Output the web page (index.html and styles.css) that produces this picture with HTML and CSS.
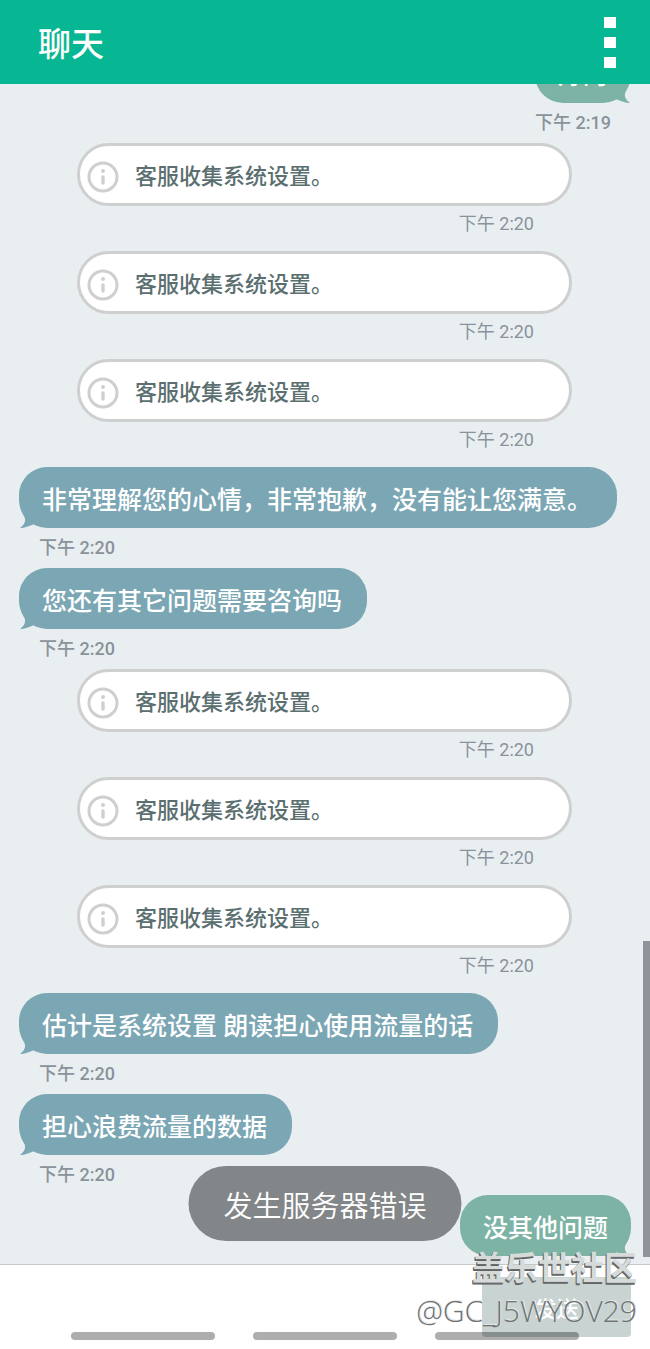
FILE: index.html
```html
<!DOCTYPE html>
<html lang="zh-CN">
  <head>
    <meta charset="UTF-8" />
    <meta name="viewport" content="width=device-width, initial-scale=1.0" />
    <title>聊天</title>
    <link rel="stylesheet" href="styles.css">
  </head>
  <body>
    <!-- shared shapes -->
    <svg class="sprites" aria-hidden="true">
      <symbol id="info" viewBox="0 0 32 32">
        <circle cx="16" cy="16" r="14" fill="none" stroke="currentColor" stroke-width="3" />
        <circle cx="16" cy="10" r="2" fill="currentColor" />
        <path d="M16 16V22" stroke="currentColor" stroke-width="3.4" stroke-linecap="round" />
      </symbol>
      <symbol id="tail" viewBox="0 0 24 16">
        <path d="M3 0C6 5 9 10 1 16C6 16 10 14 14 12.5L22 10L12 0Z" fill="currentColor" />
      </symbol>
    </svg>

    <header class="header">
      <h1>聊天</h1>
      <button class="menu-button" type="button" aria-label="菜单">
        <span></span>
        <span></span>
        <span></span>
      </button>
    </header>

    <main class="chat">
      <div class="message sent">
        <p class="bubble">好的<svg class="tail"><use href="#tail" /></svg></p>
        <time>下午 2:19</time>
      </div>

      <div class="notice">
        <p class="pill"><svg class="info"><use href="#info" /></svg>客服收集系统设置。</p>
        <time>下午 2:20</time>
      </div>
      <div class="notice">
        <p class="pill"><svg class="info"><use href="#info" /></svg>客服收集系统设置。</p>
        <time>下午 2:20</time>
      </div>
      <div class="notice">
        <p class="pill"><svg class="info"><use href="#info" /></svg>客服收集系统设置。</p>
        <time>下午 2:20</time>
      </div>

      <div class="message">
        <p class="bubble">非常理解您的心情，非常抱歉，没有能让您满意。<svg class="tail"><use href="#tail" /></svg></p>
        <time>下午 2:20</time>
      </div>
      <div class="message">
        <p class="bubble">您还有其它问题需要咨询吗<svg class="tail"><use href="#tail" /></svg></p>
        <time>下午 2:20</time>
      </div>

      <div class="notice">
        <p class="pill"><svg class="info"><use href="#info" /></svg>客服收集系统设置。</p>
        <time>下午 2:20</time>
      </div>
      <div class="notice">
        <p class="pill"><svg class="info"><use href="#info" /></svg>客服收集系统设置。</p>
        <time>下午 2:20</time>
      </div>
      <div class="notice">
        <p class="pill"><svg class="info"><use href="#info" /></svg>客服收集系统设置。</p>
        <time>下午 2:20</time>
      </div>

      <div class="message">
        <p class="bubble">估计是系统设置 朗读担心使用流量的话<svg class="tail"><use href="#tail" /></svg></p>
        <time>下午 2:20</time>
      </div>
      <div class="message">
        <p class="bubble">担心浪费流量的数据<svg class="tail"><use href="#tail" /></svg></p>
        <time>下午 2:20</time>
      </div>
      <div class="message sent">
        <p class="bubble">没其他问题<svg class="tail"><use href="#tail" /></svg></p>
      </div>

      <div class="scroll-thumb"></div>
    </main>

    <form class="composer">
      <textarea aria-label="输入消息"></textarea>
      <button class="send-button" type="button">发送</button>
    </form>

    <div class="toast" role="alert">发生服务器错误</div>

    <div class="nav-hints">
      <span></span>
      <span></span>
      <span></span>
    </div>

    <div class="watermark">
      <strong>盖乐世社区</strong>
      <span>@GC_J5WYOV29</span>
    </div>
  </body>
</html>
```
FILE: styles.css
```css
* {
  box-sizing: border-box;
}
body {
  position: relative;
  display: flex;
  flex-direction: column;
  height: 100vh;
  margin: 0;
  overflow: hidden;
  font-family: Roboto, "Noto Sans CJK SC", sans-serif;
  background-color: #fff;
}
h1,
p {
  margin: 0;
}
button {
  border: none;
  padding: 0;
  font-family: inherit;
  cursor: pointer;
}
.sprites {
  display: none;
}

/* header */
.header {
  display: flex;
  flex: none;
  align-items: center;
  justify-content: space-between;
  height: 84px;
  padding: 0 34px 0 38px;
  background-color: #07b692;
  color: #fff;
}
.header h1 {
  padding-top: 6px;
  font-size: 33px;
  line-height: 48px;
  font-weight: 500;
}
.menu-button {
  display: flex;
  flex-direction: column;
  gap: 9px;
  background: none;
}
.menu-button span {
  width: 12px;
  height: 11px;
  background-color: #fff;
}

/* conversation, pinned to the newest message */
.chat {
  position: relative;
  display: flex;
  flex: 1;
  flex-direction: column;
  justify-content: flex-end;
  min-height: 0;
  padding: 0 19px 8px;
  overflow: hidden;
  background-color: #e9eff1;
}
.message,
.notice {
  display: flex;
  flex: none;
  flex-direction: column;
}
.message {
  align-items: flex-start;
}
.sent {
  align-items: flex-end;
}
.bubble {
  position: relative;
  padding: 16px 25px 9px 23px;
  border-radius: 28px;
  background-color: #7ba6b4;
  color: #fff;
  font-size: 25px;
  line-height: 36px;
  font-weight: 500;
}
.sent .bubble {
  padding: 16px 23px 9px;
  background-color: #7db3a5;
}
.tail {
  position: absolute;
  left: 0;
  bottom: 0;
  width: 24px;
  height: 16px;
  color: #7ba6b4;
}
.sent .tail {
  left: auto;
  right: 0;
  color: #7db3a5;
  transform: scaleX(-1);
}
time {
  color: #8a929b;
  font-size: 18px;
  line-height: 24px;
}
.message time {
  margin: 8px 20px 8px;
  font-weight: 500;
}
.notice {
  padding: 0 59px 0 58px;
}
.pill {
  display: flex;
  align-items: center;
  gap: 16px;
  height: 63px;
  padding: 4px 7px 0;
  border: 3px solid #cfcfcf;
  border-radius: 32px;
  background-color: #fff;
  color: #5b6f70;
  font-size: 22px;
  line-height: 32px;
  font-weight: 500;
}
.info {
  flex: none;
  width: 32px;
  height: 32px;
  color: #cfcfcf;
}
.notice time {
  align-self: flex-end;
  margin: 6px 38px 15px;
}
.scroll-thumb {
  position: absolute;
  right: 0;
  bottom: 7px;
  width: 7px;
  height: 316px;
  background-color: #8e9499;
}

/* message box */
.composer {
  display: flex;
  flex: none;
  gap: 12px;
  height: 85px;
  padding: 12px 19px;
  border-top: 1px solid #c4c9c9;
}
.composer textarea {
  flex: 1;
  border: none;
  resize: none;
  font-family: inherit;
  font-size: 22px;
}
.send-button {
  width: 149px;
  border-radius: 4px;
  background-color: #c8d3d2;
  color: #fff;
  font-size: 22px;
  font-weight: 500;
}

/* overlays */
.toast {
  position: absolute;
  left: 50%;
  bottom: 108px;
  padding: 19px 35px 12px;
  border-radius: 38px;
  background-color: #828689;
  color: #fff;
  font-size: 29px;
  line-height: 44px;
  font-weight: 350;
  white-space: nowrap;
  transform: translateX(-50%);
}
.nav-hints {
  position: absolute;
  left: 0;
  right: 0;
  bottom: 9px;
  display: flex;
  justify-content: center;
  gap: 38px;
}
.nav-hints span {
  width: 144px;
  height: 8px;
  border-radius: 4px;
  background-color: rgba(0, 0, 0, 0.32);
}
.watermark {
  position: absolute;
  right: 13px;
  bottom: 18px;
  display: flex;
  flex-direction: column;
  align-items: flex-end;
  pointer-events: none;
}
.watermark strong {
  color: #d6dbda;
  font-size: 33px;
  line-height: 44px;
  text-shadow: -1px 1px 0 #6b6e6e, -1px 2px 0 #5f6363;
}
.watermark span {
  color: #707373;
  font-family: "Open Sans", sans-serif;
  font-size: 30px;
  line-height: 40px;
  font-weight: 300;
  text-shadow: 1px -1px 0 #e4e8e8;
}
```
